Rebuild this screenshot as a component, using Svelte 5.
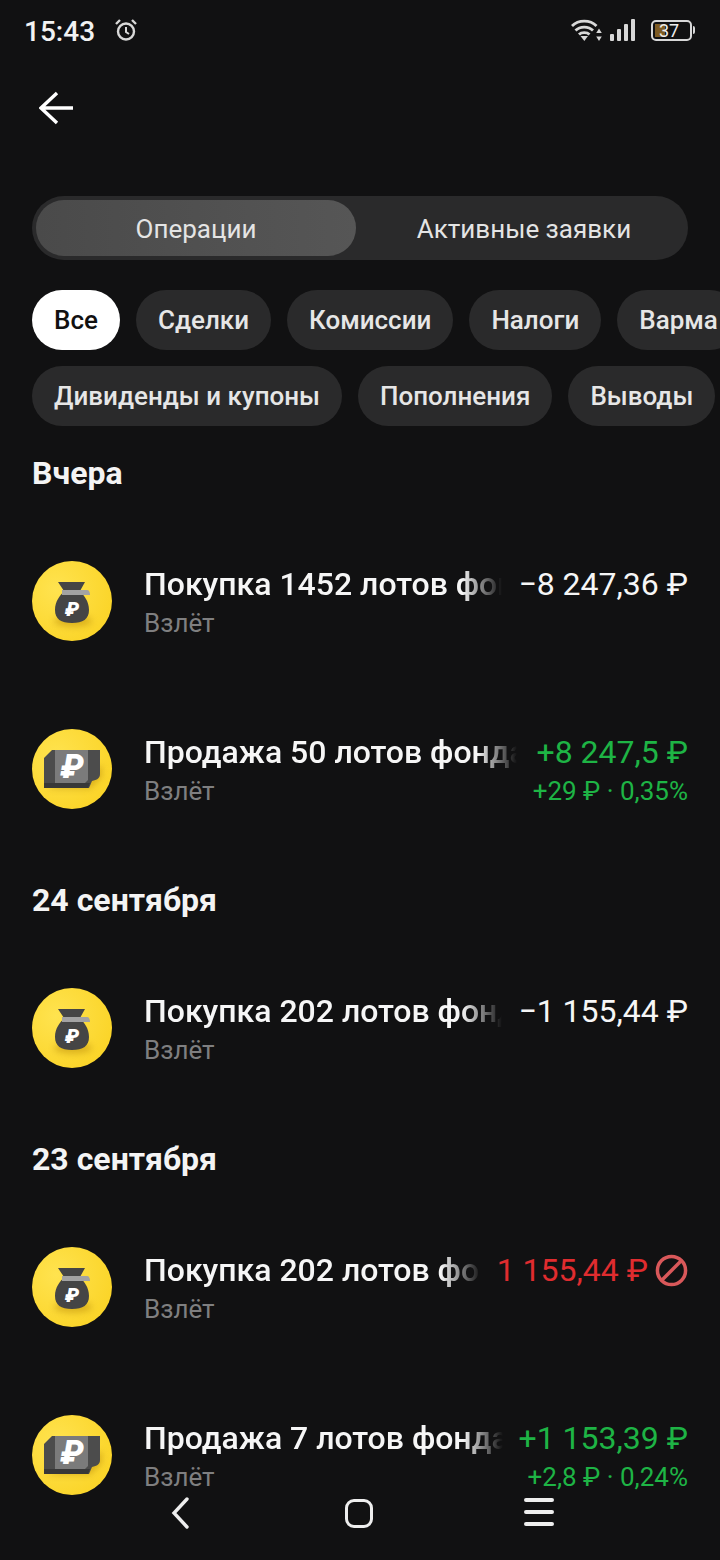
<script>
	const chipRows = [
		['Все', 'Сделки', 'Комиссии', 'Налоги', 'Варма'],
		['Дивиденды и купоны', 'Пополнения', 'Выводы']
	];

	const groups = [
		{
			title: 'Вчера',
			items: [
				{ icon: 'bag', name: 'Покупка 1452 лотов фонда', amount: '−8 247,36 ₽', tone: 'plain' },
				{ icon: 'cash', name: 'Продажа 50 лотов фонда', amount: '+8 247,5 ₽', sub: '+29 ₽ · 0,35%', tone: 'up' }
			]
		},
		{
			title: '24 сентября',
			items: [{ icon: 'bag', name: 'Покупка 202 лотов фонда', amount: '−1 155,44 ₽', tone: 'plain' }]
		},
		{
			title: '23 сентября',
			items: [
				{ icon: 'bag', name: 'Покупка 202 лотов фонда', amount: '1 155,44 ₽', tone: 'down', cancelled: true },
				{ icon: 'cash', name: 'Продажа 7 лотов фонда', amount: '+1 153,39 ₽', sub: '+2,8 ₽ · 0,24%', tone: 'up' }
			]
		}
	];
</script>

<div class="screen">
	<header class="status">
		<span class="time">15:43</span>
		<svg class="alarm" width="24" height="24" viewBox="0 0 24 24" fill="none" stroke="#d8d8d8">
			<circle cx="12" cy="13.5" r="8" stroke-width="2.4" />
			<path d="M12 9v5l3 2" stroke-width="2" />
			<path d="M2 6l4-4M22 6l-4-4" stroke-width="2.4" />
		</svg>
		<span class="spacer"></span>
		<svg class="wifi" width="31" height="22" viewBox="0 0 31 22" fill="none" stroke="#d8d8d8" stroke-width="2.8">
			<path d="M1 7c6.500-6.500 18-6.500 24.500 0M4.500 11.500c4.500-4.500 13-4.500 17.500 0M8 15.500c2.500-2.500 8-2.500 10.500 0" />
			<path d="M9.500 17h7.500l-3.700 5z" fill="#d8d8d8" stroke="none" />
			<path d="M28 9.500l2.800 4.500h-5.600zM28 22l2.800-4.500h-5.600z" fill="#d8d8d8" stroke="none" />
		</svg>
		<svg class="signal" width="25" height="22" viewBox="0 0 25 22" fill="#d8d8d8">
			<rect x="0" y="15" width="4" height="7" rx="1" />
			<rect x="7" y="10" width="4" height="12" rx="1" />
			<rect x="14" y="5" width="4" height="17" rx="1" />
			<rect x="21" y="0" width="4" height="22" rx="1" />
		</svg>
		<div class="battery">
			<span class="charge"></span>
			<span class="level">37</span>
		</div>
		<span class="nub"></span>
	</header>

	<div class="topbar">
		<svg width="34" height="34" viewBox="0 0 34 34" fill="none" stroke="#fff" stroke-width="3.400">
			<path d="M18 2L2 17l16 15M2 17h32" />
		</svg>
	</div>

	<div class="segments">
		<div class="segment active">Операции</div>
		<div class="segment">Активные заявки</div>
	</div>

	<div class="chips">
		{#each chipRows as chips}
			<div class="chip-row">
				{#each chips as chip}
					<span class="chip" class:selected={chip === 'Все'}>{chip}</span>
				{/each}
			</div>
		{/each}
	</div>

	{#each groups as group}
		<section>
			<h2>{group.title}</h2>
			{#each group.items as item}
				<div class="row">
					<div class="avatar">
						{#if item.icon === 'bag'}
							<svg width="80" height="80" viewBox="0 0 80 80">
								<ellipse class="shade" cx="41" cy="60" rx="19" ry="6" />
								<path d="M26 21h27l-5 9c4 5 9 10 9 19 0 9-6 13-17 13s-17-4-17-13c0-9 5-14 9-19z" fill="#454545" />
								<path d="M30 29h25c2 0 3 2 3 5H30z" fill="#a3a3a3" />
								<text x="40" y="55" class="rub-small">₽</text>
							</svg>
						{:else}
							<svg width="80" height="80" viewBox="0 0 80 80">
								<path class="shade" d="M14 60h44l12-12v-12z" />
								<path d="M20 21h48v24c0 4-3 6-8 7l-3 7H12V29z" fill="#4c4c4c" />
								<path d="M12 54h46l-2 5H12z" fill="#383838" />
								<path d="M23 21h33v30l-3 3H23z" fill="#7b7b7b" />
								<text x="40" y="49" class="rub-big">₽</text>
							</svg>
						{/if}
					</div>
					<div class="info">
						<div class="name">{item.name}</div>
						<div class="company">Взлёт</div>
					</div>
					<div class="sums {item.tone}">
						<div class="amount">
							{item.amount}
							{#if item.cancelled}
								<svg class="ban" width="33" height="33" viewBox="0 0 34 34" fill="none" stroke="#d9585a" stroke-width="3.600">
									<circle cx="17" cy="17" r="14.500" />
									<path d="M7 27L27 7" />
								</svg>
							{/if}
						</div>
						{#if item.sub}
							<div class="sub">{item.sub}</div>
						{/if}
					</div>
				</div>
			{/each}
		</section>
	{/each}

	<nav class="navbar">
		<svg width="18" height="32" viewBox="0 0 18 32" fill="none" stroke="#eee" stroke-width="3.400" stroke-linecap="round">
			<path d="M16 2L3 16l13 14" />
		</svg>
		<span class="home"></span>
		<svg width="30" height="30" viewBox="0 0 30 30" fill="none" stroke="#eee" stroke-width="4" stroke-linecap="round">
			<path d="M2 2h26M2 14h26M2 26h26" />
		</svg>
	</nav>
</div>

<style>
	:global(body) {
		margin: 0;
		background: #111112;
	}

	.screen {
		position: relative;
		width: 720px;
		height: 1560px;
		overflow: hidden;
		background: #111112;
		color: #fff;
		font-family: Roboto, "Liberation Sans", sans-serif;
	}

	.status {
		display: flex;
		align-items: center;
		height: 62px;
		padding: 0 25px 0 24px;
		box-sizing: border-box;
	}

	.time {
		font-size: 28px;
		font-weight: 500;
		color: #f2f2f2;
		width: 90px;
	}

	.alarm {
		margin-bottom: 2px;
	}

	.spacer {
		flex: 1;
	}

	.wifi {
		margin-right: 8px;
		margin-bottom: 2px;
	}

	.signal {
		margin-right: 16px;
		margin-bottom: 2px;
	}

	.battery {
		position: relative;
		width: 37px;
		height: 17px;
		margin-bottom: 2px;
		border: 2px solid #d8d8d8;
		border-radius: 5px;
		display: flex;
		align-items: center;
		overflow: hidden;
	}

	.charge {
		position: absolute;
		left: 2px;
		top: 2px;
		bottom: 2px;
		width: 10px;
		background: #7d5a22;
	}

	.level {
		position: relative;
		margin-left: 6px;
		font-size: 18px;
		line-height: 17px;
		color: #eee;
	}

	.nub {
		width: 2px;
		height: 8px;
		margin: 0 0 2px 1px;
		background: #d8d8d8;
		border-radius: 0 2px 2px 0;
	}

	.topbar {
		display: flex;
		align-items: center;
		height: 92px;
		padding-left: 39px;
	}

	.segments {
		display: flex;
		align-items: center;
		margin: 42px 32px 0;
		height: 64px;
		padding: 0 4px;
		border-radius: 32px;
		background: #2a2a2b;
	}

	.segment {
		flex: 1;
		text-align: center;
		height: 56px;
		line-height: 58px;
		padding-left: 8px;
		font-size: 26px;
		color: #e4e4e4;
		border-radius: 28px;
	}

	.segment.active {
		flex: 0 0 320px;
		padding-left: 0;
		background: linear-gradient(90deg, #4a4a4a, #565656);
	}

	.chips {
		display: flex;
		flex-direction: column;
		gap: 16px;
		margin-top: 30px;
		padding-left: 32px;
	}

	.chip-row {
		display: flex;
		gap: 16px;
	}

	.chip {
		flex: none;
		height: 60px;
		line-height: 60px;
		padding: 0 22px;
		border-radius: 30px;
		background: #2a2a2b;
		font-size: 26px;
		font-weight: 500;
		color: #e6e6e6;
	}

	.chip.selected {
		background: #fff;
		color: #111;
	}

	section {
		padding: 0 32px;
	}

	h2 {
		margin: 27px 0 24px;
		height: 40px;
		line-height: 40px;
		font-size: 32px;
		font-weight: 700;
		color: #f4f4f4;
	}

	.row {
		display: flex;
		align-items: center;
		height: 168px;
	}

	.avatar {
		flex: none;
		width: 80px;
		height: 80px;
		margin-right: 32px;
		border-radius: 50%;
		overflow: hidden;
		background: radial-gradient(circle at 30% 35%, #ffe34f, #fbd52a 75%);
	}

	.avatar svg {
		display: block;
	}

	.shade {
		fill: #c79a10;
		opacity: 0.6;
		filter: blur(3px);
	}

	.rub-small,
	.rub-big {
		fill: #fff;
		font-weight: 900;
		font-style: italic;
		text-anchor: middle;
	}

	.rub-small {
		font-size: 20px;
	}

	.rub-big {
		font-size: 33px;
	}

	.info {
		flex: 1;
		min-width: 0;
		height: 80px;
		margin-right: 16px;
	}

	.name {
		font-size: 32px;
		font-weight: 500;
		line-height: 46px;
		white-space: nowrap;
		overflow: hidden;
		color: #f6f6f6;
		mask-image: linear-gradient(90deg, #000 calc(100% - 40px), transparent);
	}

	.company {
		font-size: 26px;
		line-height: 32px;
		color: #7f7f80;
	}

	.sums {
		flex: none;
		height: 80px;
		text-align: right;
	}

	.amount {
		display: flex;
		align-items: center;
		justify-content: flex-end;
		gap: 7px;
		font-size: 32px;
		line-height: 46px;
		height: 46px;
		white-space: nowrap;
	}

	.sub {
		font-size: 26px;
		line-height: 32px;
	}

	.plain {
		color: #f6f6f6;
	}

	.up {
		color: #1eb445;
	}

	.down {
		color: #e02c2f;
	}

	.navbar {
		position: absolute;
		left: 0;
		right: 0;
		top: 1496px;
		height: 34px;
		display: flex;
		align-items: center;
	}

	.navbar svg:first-child {
		margin-left: 171px;
	}

	.home {
		width: 28px;
		height: 29px;
		margin-left: 156px;
		border: 3.500px solid #eee;
		border-radius: 9px;
		box-sizing: border-box;
	}

	.navbar svg:last-child {
		margin-left: 151px;
	}
</style>
